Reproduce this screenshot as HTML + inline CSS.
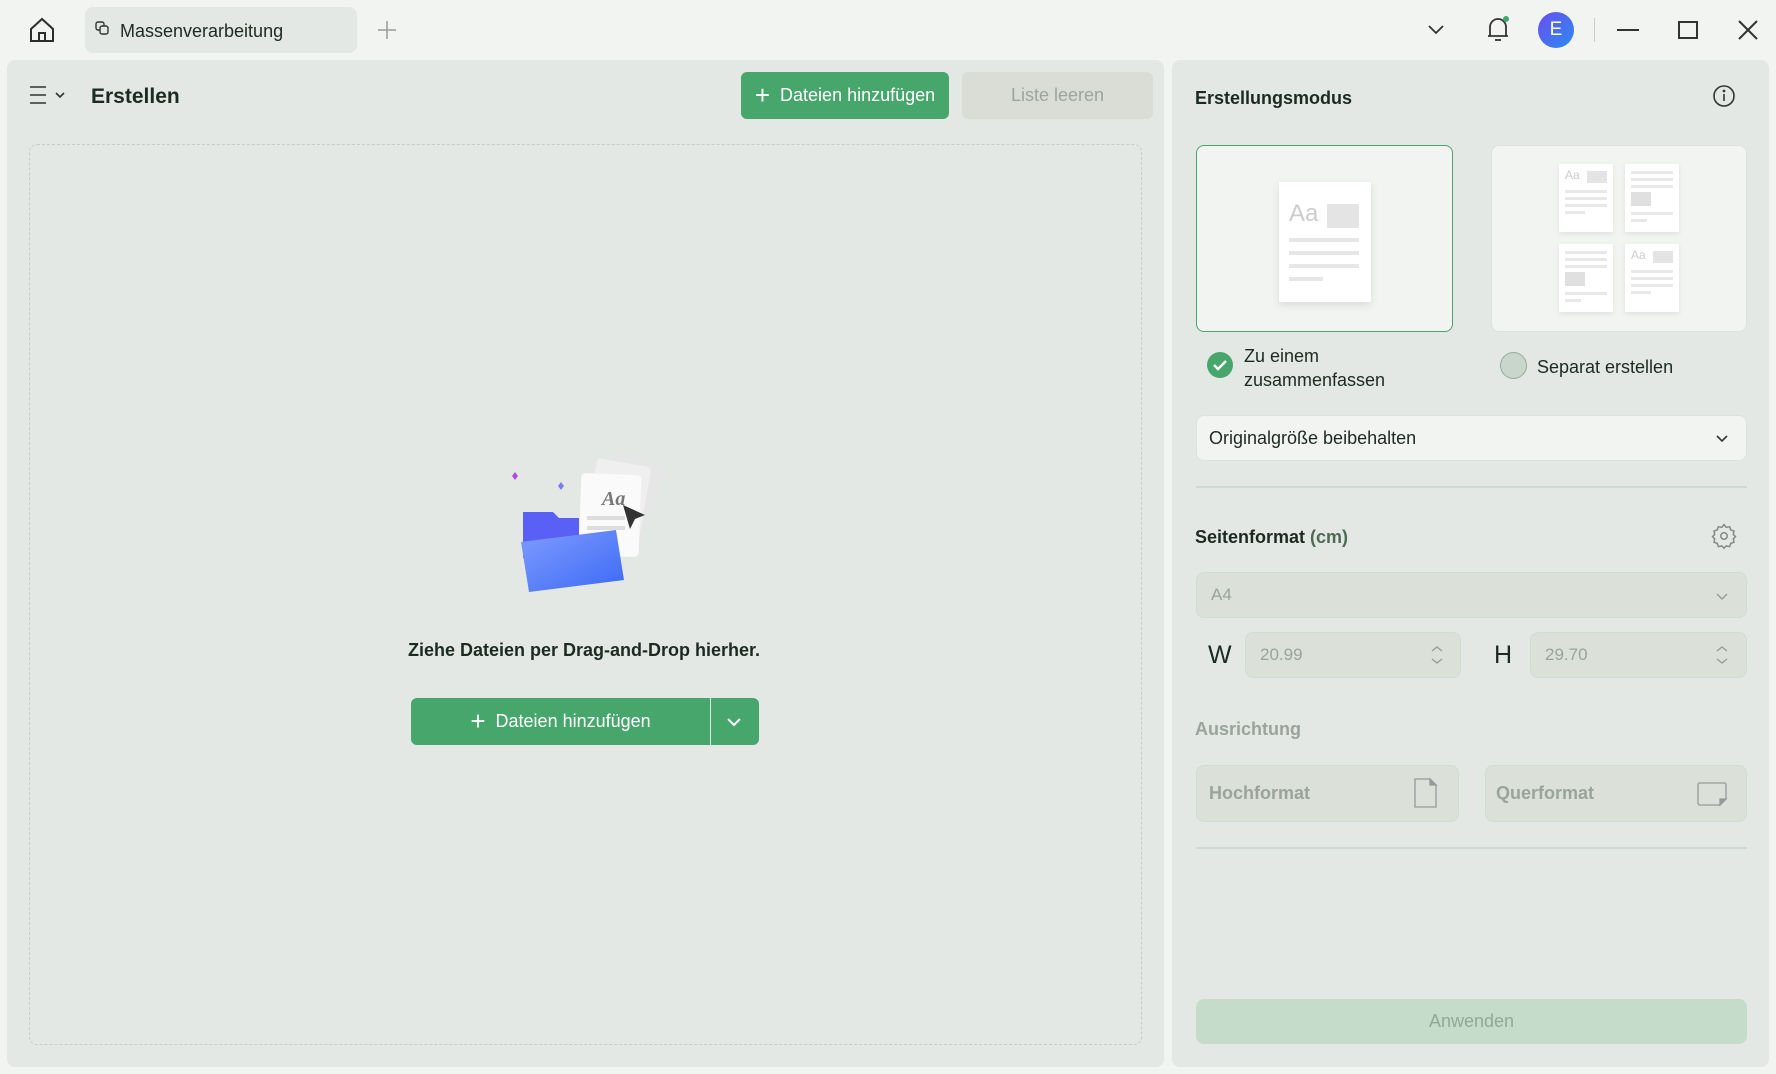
<!DOCTYPE html>
<html><head><meta charset="utf-8"><style>
*{box-sizing:border-box;margin:0;padding:0}
body{width:1776px;height:1074px;background:#f2f4f1;font-family:"Liberation Sans",sans-serif;position:relative;overflow:hidden;color:#1d2a22}
.a{position:absolute}
.panel{position:absolute;background:#e3e8e4;border-radius:8px}
.btn{position:absolute;display:flex;align-items:center;justify-content:center;border-radius:6px;font-size:18px}
.inp{position:absolute;border:1px solid #d0dcd2;border-radius:8px;background:#dbe0d9;color:#9aa39c;font-size:17px;display:flex;align-items:center;padding-left:14px}
.lbl{position:absolute;font-size:18px;font-weight:bold}
svg{position:absolute;overflow:visible}
.pg{position:absolute;width:54px;height:68px;background:#fff;box-shadow:0 2px 5px rgba(0,0,0,.08)}
.pg i{position:absolute;left:6px;width:42px;height:3px;background:#e8e8e8}
</style></head><body>
<!-- top bar -->
<svg style="left:28px;top:16px" width="28" height="28" viewBox="0 0 28 28" fill="none" stroke="#2a2f2c" stroke-width="2"><path d="M3 13 L14 3 L25 13 V25 H3 Z"/><path d="M11 25 V17 H17 V25"/></svg>
<div class="a" style="left:85px;top:7px;width:272px;height:46px;background:#e3e8e4;border-radius:8px"></div>
<svg style="left:95px;top:21px" width="14" height="14" viewBox="0 0 14 14" fill="none" stroke="#333" stroke-width="1.4"><rect x="1" y="1" width="8" height="8" rx="2"/><rect x="5" y="5" width="8" height="8" rx="2" fill="#e3e8e4"/></svg>
<div class="a" style="left:120px;top:21px;font-size:18px;color:#1d2a22">Massenverarbeitung</div>
<svg style="left:378px;top:21px" width="18" height="18" stroke="#999" stroke-width="1.5"><path d="M9 0V18M0 9H18"/></svg>
<svg style="left:1428px;top:25px" width="16" height="10" fill="none" stroke="#333" stroke-width="1.8"><path d="M1 1L8 8L15 1"/></svg>
<svg style="left:1485px;top:14px" width="26" height="30" fill="none" stroke="#333" stroke-width="1.8"><path d="M5 22V13A8 8 0 0 1 21 13V22H3H23"/><path d="M10 26H16"/><circle cx="21" cy="5" r="3" fill="#3caa6a" stroke="none"/></svg>
<div class="a" style="left:1538px;top:12px;width:36px;height:36px;border-radius:50%;background:linear-gradient(135deg,#6a4df0,#2a8cf0);color:#fff;font-size:19px;display:flex;align-items:center;justify-content:center">E</div>
<div class="a" style="left:1594px;top:18px;width:1px;height:24px;background:#ccc"></div>
<div class="a" style="left:1617px;top:29px;width:22px;height:2px;background:#333"></div>
<div class="a" style="left:1678px;top:21px;width:20px;height:18px;border:2px solid #333"></div>
<svg style="left:1738px;top:20px" width="20" height="20" stroke="#333" stroke-width="2"><path d="M1 1L19 19M19 1L1 19"/></svg>

<!-- left panel -->
<div class="panel" style="left:7px;top:60px;width:1157px;height:1007px"></div>
<svg style="left:30px;top:86px" width="34" height="20" fill="none" stroke="#333" stroke-width="1.6"><path d="M0 1H16M0 9H16M0 17H16M26 7L30 11L34 7"/></svg>
<div class="lbl" style="left:91px;top:85px;font-size:21px">Erstellen</div>
<div class="btn" style="left:741px;top:72px;width:208px;height:47px;background:#47a66c;color:#fff"><span style="font-size:26px;margin-right:10px;font-weight:300">+</span>Dateien hinzufügen</div>
<div class="btn" style="left:962px;top:72px;width:191px;height:47px;background:#d9ddd6;color:#9da59f">Liste leeren</div>
<div class="a" style="left:29px;top:144px;width:1113px;height:901px;border:1.5px dashed #c6ccc6;border-radius:8px"></div>
<!-- illustration -->
<svg style="left:505px;top:450px" width="170" height="150" viewBox="0 0 170 150">
<path d="M7 26l3-4 3 4-3 4z" fill="#b04ae0"/><path d="M53 36l3-4 3 4-3 4z" fill="#7b7bf0"/>
<rect x="95" y="8" width="55" height="80" rx="4" fill="#e6e6e6" transform="rotate(18 120 48)"/>
<rect x="85" y="12" width="55" height="80" rx="4" fill="#efefef" transform="rotate(10 112 52)"/>
<rect x="75" y="24" width="60" height="82" rx="4" fill="#fafafa" transform="rotate(2 105 65)"/>
<text x="97" y="55" font-size="20" font-style="italic" font-weight="bold" fill="#777" font-family="Liberation Serif">Aa</text>
<rect x="82" y="66" width="38" height="4" fill="#ddd"/><rect x="82" y="76" width="38" height="4" fill="#ddd"/>
<path d="M118 55l22 10-10 4-5 10z" fill="#333"/>
<path d="M18 62h30l6 6h20v40H18z" fill="#5a5ff5"/>
<path d="M16 92l95-12 8 50-95 12z" fill="url(#g)"/>
<defs><linearGradient id="g" x1="0" y1="0" x2="1" y2="1"><stop offset="0" stop-color="#7f9cff"/><stop offset="1" stop-color="#3c6af5"/></linearGradient></defs>
</svg>
<div class="lbl" style="left:300px;top:640px;width:568px;text-align:center;font-size:18px">Ziehe Dateien per Drag-and-Drop hierher.</div>
<div class="btn" style="left:411px;top:698px;width:348px;height:47px;background:#47a66c;color:#fff;justify-content:flex-start"><div style="width:299px;display:flex;justify-content:center;align-items:center"><span style="font-size:26px;margin-right:10px;font-weight:300">+</span>Dateien hinzufügen</div><div style="width:1px;height:47px;background:#e4efe8"></div><svg style="position:relative;margin-left:16px" width="14" height="8" fill="none" stroke="#fff" stroke-width="2"><path d="M1 1L7 7L13 1"/></svg></div>

<!-- right panel -->
<div class="panel" style="left:1172px;top:60px;width:597px;height:1007px"></div>
<div class="lbl" style="left:1195px;top:88px">Erstellungsmodus</div>
<svg style="left:1713px;top:85px" width="22" height="22" fill="none" stroke="#333" stroke-width="1.6"><circle cx="11" cy="11" r="10"/><path d="M11 9V16"/><circle cx="11" cy="6" r="0.6"/></svg>
<div class="a" style="left:1196px;top:145px;width:257px;height:187px;border:1.5px solid #47a66c;border-radius:8px;background:#f2f4f1"></div>
<div class="a" style="left:1279px;top:182px;width:92px;height:120px;background:#fff;box-shadow:0 3px 8px rgba(0,0,0,.1)"><div style="position:absolute;left:10px;top:18px;font-size:24px;color:#ccc">Aa</div><div style="position:absolute;left:48px;top:22px;width:32px;height:24px;background:#e4e4e4"></div><div style="position:absolute;left:10px;top:56px;width:70px;height:4px;background:#e6e6e6;box-shadow:0 13px #e6e6e6,0 26px #e6e6e6"></div><div style="position:absolute;left:10px;top:95px;width:34px;height:4px;background:#e6e6e6"></div></div>
<div class="a" style="left:1491px;top:145px;width:256px;height:187px;border:1px solid #dde2dd;border-radius:8px;background:#f2f4f1"></div>
<div class="pg" style="left:1559px;top:164px"><div style="position:absolute;left:6px;top:4px;font-size:12px;color:#ccc">Aa</div><div style="position:absolute;left:28px;top:7px;width:20px;height:12px;background:#e4e4e4"></div><i style="top:26px"></i><i style="top:33px"></i><i style="top:40px"></i><i style="top:47px;width:20px"></i></div>
<div class="pg" style="left:1625px;top:164px"><i style="top:7px"></i><i style="top:14px"></i><i style="top:21px"></i><div style="position:absolute;left:6px;top:28px;width:20px;height:14px;background:#e0e0e0"></div><i style="top:48px"></i><i style="top:55px;width:16px"></i></div>
<div class="pg" style="left:1559px;top:244px"><i style="top:7px"></i><i style="top:14px"></i><i style="top:21px"></i><div style="position:absolute;left:6px;top:28px;width:20px;height:14px;background:#e0e0e0"></div><i style="top:48px"></i><i style="top:55px;width:16px"></i></div>
<div class="pg" style="left:1625px;top:244px"><div style="position:absolute;left:6px;top:4px;font-size:12px;color:#ccc">Aa</div><div style="position:absolute;left:28px;top:7px;width:20px;height:12px;background:#e4e4e4"></div><i style="top:26px"></i><i style="top:33px"></i><i style="top:40px"></i><i style="top:47px;width:20px"></i></div>
<svg style="left:1207px;top:352px" width="26" height="26"><circle cx="13" cy="13" r="13" fill="#47a66c"/><path d="M7 13l4 4 8-8" stroke="#fff" stroke-width="2.5" fill="none"/></svg>
<div class="a" style="left:1244px;top:344px;font-size:18px;line-height:24px">Zu einem<br>zusammenfassen</div>
<div class="a" style="left:1500px;top:352px;width:27px;height:27px;border-radius:50%;background:#c8d6cb;border:1.5px solid #98a89c"></div>
<div class="a" style="left:1537px;top:357px;font-size:18px">Separat erstellen</div>
<div class="a" style="left:1196px;top:415px;width:551px;height:46px;background:#f2f4f1;border:1px solid #dde2dd;border-radius:8px;font-size:18px;display:flex;align-items:center;padding-left:12px">Originalgröße beibehalten</div>
<svg style="left:1716px;top:435px" width="12" height="7" fill="none" stroke="#333" stroke-width="1.6"><path d="M1 1L6 6L11 1"/></svg>
<div class="a" style="left:1196px;top:486px;width:551px;height:2px;background:#cfd9d1"></div>
<div class="lbl" style="left:1195px;top:527px">Seitenformat <span style="color:#4f6a55">(cm)</span></div>
<svg style="left:1711px;top:523px" width="26" height="26" viewBox="0 0 24 24" fill="none" stroke="#888" stroke-width="1.4"><circle cx="12" cy="12" r="3"/><path d="M12 1.5l2 2.5 3.2-.6 1 3 3 1-.6 3.2 2 2-2 2 .6 3.2-3 1-1 3-3.2-.6-2 2-2-2-3.2.6-1-3-3-1 .6-3.2-2-2 2-2-.6-3.2 3-1 1-3 3.2.6z"/></svg>
<div class="inp" style="left:1196px;top:572px;width:551px;height:46px">A4</div>
<svg style="left:1716px;top:593px" width="12" height="7" fill="none" stroke="#999" stroke-width="1.4"><path d="M1 1L6 6L11 1"/></svg>
<div class="a" style="left:1208px;top:641px;font-size:25px;color:#1d2a22">W</div>
<div class="inp" style="left:1245px;top:632px;width:216px;height:46px">20.99</div>
<div class="a" style="left:1494px;top:641px;font-size:25px">H</div>
<div class="inp" style="left:1530px;top:632px;width:217px;height:46px">29.70</div>
<svg style="left:1431px;top:646px" width="12" height="18" fill="none" stroke="#999" stroke-width="1.3"><path d="M1 5L6 1L11 5M1 13L6 17L11 13"/></svg>
<svg style="left:1716px;top:646px" width="12" height="18" fill="none" stroke="#999" stroke-width="1.3"><path d="M1 5L6 1L11 5M1 13L6 17L11 13"/></svg>
<div class="lbl" style="left:1195px;top:719px;color:#9aa39c">Ausrichtung</div>
<div class="inp" style="left:1196px;top:765px;width:263px;height:57px;font-weight:bold;font-size:18px;padding-left:12px">Hochformat</div>
<svg style="left:1413px;top:778px" width="24" height="30" fill="none" stroke="#999" stroke-width="1.3"><path d="M2 1H17L23 7V29H2Z"/><path d="M17 1L23 7H17Z" fill="#999"/></svg>
<div class="inp" style="left:1485px;top:765px;width:262px;height:57px;font-weight:bold;font-size:18px;padding-left:10px">Querformat</div>
<svg style="left:1697px;top:782px" width="30" height="24" fill="none" stroke="#999" stroke-width="1.3"><path d="M1 3Q1 1 3 1H27Q29 1 29 3V17L23 23H3Q1 23 1 21Z"/><path d="M29 17L23 23V17Z" fill="#999"/></svg>
<div class="a" style="left:1196px;top:847px;width:551px;height:2px;background:#cfd9d1"></div>
<div class="btn" style="left:1196px;top:999px;width:551px;height:45px;background:#c6dccb;color:#8eaa96;border-radius:8px">Anwenden</div>
</body></html>
